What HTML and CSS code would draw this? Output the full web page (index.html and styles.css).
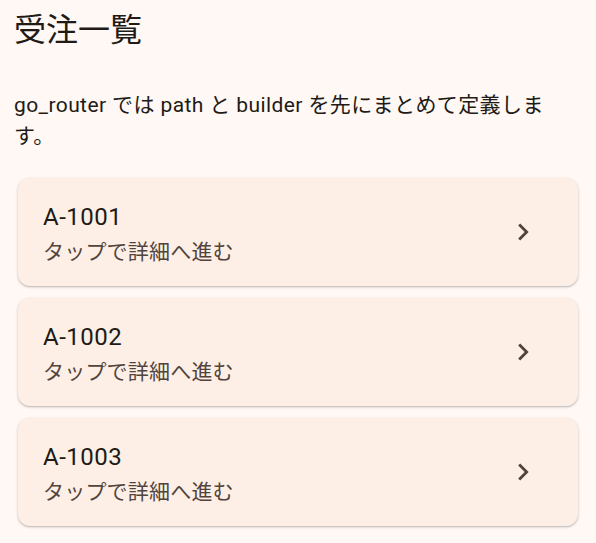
FILE: index.html
```html
<!DOCTYPE html>
<html lang="ja">
<head>
    <meta charset="UTF-8">
    <meta name="viewport" content="width=device-width, initial-scale=1.0">
    <title>受注一覧</title>
    <link rel="stylesheet" href="styles.css">
</head>
<body>
    <div class="page">
        <h1 class="page-title">受注一覧</h1>
        <p class="page-note">go_router では path と builder を先にまとめて定義します。</p>

        <!-- Order list -->
        <div class="order-list">
            <div class="order-card">
                <div class="order-text">
                    <div class="order-id">A-1001</div>
                    <div class="order-hint">タップで詳細へ進む</div>
                </div>
                <svg class="chevron" viewBox="0 0 24 24"><path d="M10 6L8.59 7.41 13.17 12l-4.58 4.59L10 18l6-6z"/></svg>
            </div>
            <div class="order-card">
                <div class="order-text">
                    <div class="order-id">A-1002</div>
                    <div class="order-hint">タップで詳細へ進む</div>
                </div>
                <svg class="chevron" viewBox="0 0 24 24"><path d="M10 6L8.59 7.41 13.17 12l-4.58 4.59L10 18l6-6z"/></svg>
            </div>
            <div class="order-card">
                <div class="order-text">
                    <div class="order-id">A-1003</div>
                    <div class="order-hint">タップで詳細へ進む</div>
                </div>
                <svg class="chevron" viewBox="0 0 24 24"><path d="M10 6L8.59 7.41 13.17 12l-4.58 4.59L10 18l6-6z"/></svg>
            </div>
        </div>
    </div>
</body>
</html>
```

FILE: styles.css
```css
/* Base */
* {
    margin: 0;
    padding: 0;
    box-sizing: border-box;
}

body {
    background-color: #fff8f5;
    color: #211a15;
    font-family: 'Roboto', 'Noto Sans CJK JP', sans-serif;
}

.page {
    padding: 8px 14px 16px;
}

.page-title {
    font-size: 32px;
    font-weight: 400;
    line-height: 44px;
}

.page-note {
    font-size: 21px;
    line-height: 31px;
    letter-spacing: 0.4px;
    margin-top: 38px;
    padding-right: 30px;
}

/* Order cards */
.order-list {
    display: flex;
    flex-direction: column;
    gap: 12px;
    margin-top: 26px;
}

.order-card {
    display: flex;
    align-items: center;
    height: 108px;
    margin: 0 4px;
    padding: 0 38px 0 25px;
    background-color: #fdefe6;
    border-radius: 12px;
    box-shadow: 0 1px 3px rgba(0, 0, 0, 0.22), 0 1px 1px rgba(0, 0, 0, 0.08);
}

.order-text {
    flex: 1;
    margin-top: 4px;
}

.order-id {
    font-size: 24px;
    line-height: 32px;
    letter-spacing: 0.5px;
}

.order-hint {
    font-size: 21px;
    line-height: 30px;
    margin-top: 4px;
    color: #52443c;
    letter-spacing: 0.2px;
}

.chevron {
    width: 34px;
    height: 34px;
    fill: #52443c;
}
```
